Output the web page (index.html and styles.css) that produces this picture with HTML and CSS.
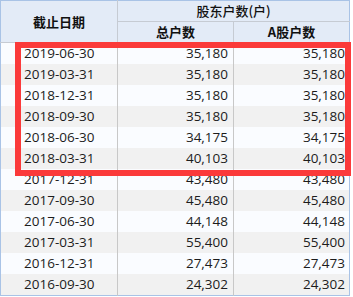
FILE: index.html
```html
<!DOCTYPE html>
<html lang="zh-CN">
<head>
<meta charset="utf-8">
<title>股东户数</title>
<link rel="stylesheet" href="styles.css">
</head>
<body>
<div class="wrap">
  <table class="grid">
    <colgroup>
      <col class="c1"><col class="c2"><col class="c3">
    </colgroup>
    <thead>
      <tr class="h1">
        <th rowspan="2" class="bold">截止日期</th>
        <th colspan="2" class="top">股东户数(户)</th>
      </tr>
      <tr class="h2">
        <th class="bold">总户数</th>
        <th class="bold">A股户数</th>
      </tr>
    </thead>
    <tbody>
      <tr><td class="d">2019-06-30</td><td>35,180</td><td>35,180</td></tr>
      <tr><td class="d">2019-03-31</td><td>35,180</td><td>35,180</td></tr>
      <tr><td class="d">2018-12-31</td><td>35,180</td><td>35,180</td></tr>
      <tr><td class="d">2018-09-30</td><td>35,180</td><td>35,180</td></tr>
      <tr><td class="d">2018-06-30</td><td>34,175</td><td>34,175</td></tr>
      <tr><td class="d">2018-03-31</td><td>40,103</td><td>40,103</td></tr>
      <tr><td class="d">2017-12-31</td><td>43,480</td><td>43,480</td></tr>
      <tr><td class="d">2017-09-30</td><td>45,480</td><td>45,480</td></tr>
      <tr><td class="d">2017-06-30</td><td>44,148</td><td>44,148</td></tr>
      <tr><td class="d">2017-03-31</td><td>55,400</td><td>55,400</td></tr>
      <tr><td class="d">2016-12-31</td><td>27,473</td><td>27,473</td></tr>
      <tr><td class="d">2016-09-30</td><td>24,302</td><td>24,302</td></tr>
    </tbody>
  </table>
  <div class="highlight"></div>
</div>
</body>
</html>
```

FILE: styles.css
```css
html, body {
  margin: 0;
  padding: 0;
  background: #ffffff;
}

.wrap {
  position: relative;
  width: 353px;
  height: 297px;
}

.grid {
  border-collapse: collapse;
  table-layout: fixed;
  width: 349px;
  border: 1px solid #a9c3e6;
  font-family: "Open Sans", "Noto Sans CJK SC", sans-serif;
  color: #1c1c1c;
}

.c1 { width: 117px; }
.c2 { width: 116px; }
.c3 { width: 116px; }

thead th {
  background: #e3ebf7;
  font-family: "Noto Sans CJK SC", sans-serif;
  font-size: 13px;
  font-weight: 500;
  color: #111;
  padding: 0;
  line-height: 20px;
  border: 1px solid #c6cbd3;
  text-align: center;
}

thead th.bold { font-weight: 700; }

.h1 th { height: 20px; }
.h2 th { height: 20px; }

thead tr.h1 th:first-child { border-left-color: #a9c3e6; border-top-color: #a9c3e6; }
thead tr.h1 th.top { border-top-color: #a9c3e6; border-right-color: #a9c3e6; }
thead tr.h2 th:last-child { border-right-color: #a9c3e6; }

tbody td {
  height: 21px;
  padding: 0 5px 0 0;
  font-size: 13.5px;
  line-height: 21px;
  text-align: right;
  border-left: 1px solid #c8c8c8;
  border-right: 1px solid #c8c8c8;
  border-top: 0;
  border-bottom: 0;
  white-space: nowrap;
  overflow: hidden;
}

tbody td:first-child { border-left-color: #a9c3e6; }
tbody td:last-child { border-right-color: #a9c3e6; padding-right: 4px; }

tbody td.d {
  text-align: left;
  padding: 0 0 0 23px;
}

tbody tr:nth-child(odd) td { background: #fafcff; }
tbody tr:nth-child(even) td { background: #f1f1f1; }

.highlight {
  position: absolute;
  left: 15px;
  top: 42px;
  width: 324px;
  height: 122px;
  border: 6px solid #fb3a3a;
  pointer-events: none;
}
```
